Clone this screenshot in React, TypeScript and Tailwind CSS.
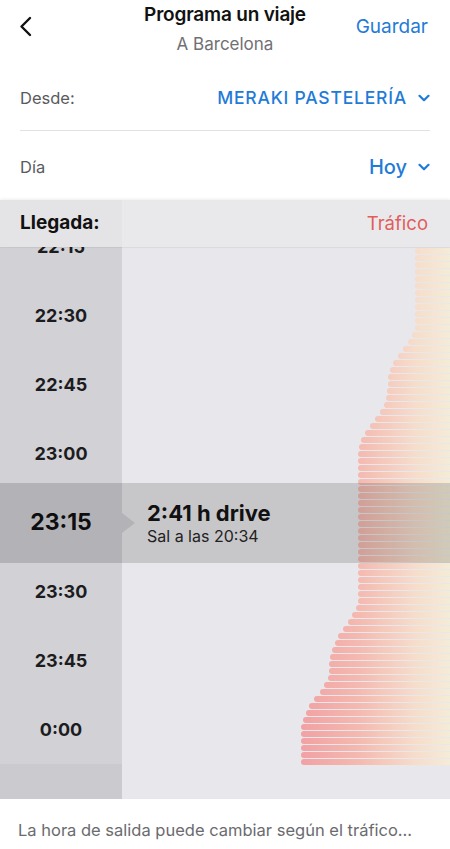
import React from "react";

const TIMES = ["22:15", "22:30", "22:45", "23:00", "23:15", "23:30", "23:45", "0:00"];
const SELECTED = "23:15";

// left edge (page x) of the traffic bars, sampled by page y
const EDGE: [number, number][] = [
  [247, 415], [330, 415], [335, 412], [345, 406], [352, 401], [358, 396],
  [365, 392], [372, 389], [390, 387], [400, 386], [405, 384], [410, 381],
  [415, 378], [422, 373], [430, 367], [436, 363], [443, 360], [450, 358],
  [605, 358], [610, 354], [615, 352], [621, 349], [628, 344], [635, 339],
  [642, 335], [649, 332], [656, 330], [670, 329], [677, 328], [684, 325],
  [691, 321], [698, 315], [705, 310], [712, 306], [719, 303], [726, 301],
  [770, 301],
];

function edgeAt(y: number) {
  for (let i = 1; i < EDGE.length; i++) {
    const [y0, x0] = EDGE[i - 1];
    const [y1, x1] = EDGE[i];
    if (y <= y1) return x0 + ((x1 - x0) * (y - y0)) / (y1 - y0);
  }
  return EDGE[EDGE.length - 1][1];
}

const BARS = Array.from({ length: 74 }, (_, i) => Math.round(450 - edgeAt(248 + i * 7 + 3)));

function ChevronDown() {
  return (
    <svg width="12" height="8" viewBox="0 0 12 8" fill="none">
      <path d="M1.5 1.8 6 6.2l4.5-4.4" stroke="#1f7bd8" strokeWidth="2.2" strokeLinecap="round" strokeLinejoin="round" />
    </svg>
  );
}

export default function App() {
  return (
    <div className="w-[450px] h-[849px] overflow-hidden bg-white text-[#111] font-['Inter',sans-serif]">
      {/* Nav */}
      <div className="relative h-[66px]">
        <button className="absolute left-[18px] top-[16px]">
          <svg width="16" height="21" viewBox="0 0 16 21" fill="none">
            <path d="M12 2 3.5 10.5 12 19" stroke="#111" strokeWidth="2.4" strokeLinecap="round" strokeLinejoin="round" />
          </svg>
        </button>
        <div className="flex flex-col items-center pt-[3px]">
          <h1 className="text-[19px] leading-[24px] font-semibold tracking-[-0.2px]">Programa un viaje</h1>
          <p className="mt-[6px] text-[17px] leading-[22px] text-[#707075]">A Barcelona</p>
        </div>
        <button className="absolute right-[22px] top-[15px] text-[19px] leading-[24px] text-[#1f7bd8]">Guardar</button>
      </div>

      {/* Form */}
      <div className="px-5">
        <div className="flex h-[64px] items-center justify-between">
          <span className="text-[16.5px] text-[#5a5a5e]">Desde:</span>
          <span className="flex items-center gap-[11px] text-[17.5px] font-medium tracking-[0.8px] text-[#1f7bd8]">
            MERAKI PASTELERÍA
            <ChevronDown />
          </span>
        </div>
        <div className="h-px bg-[#e2e2e4]" />
        <div className="flex h-[69px] items-center justify-between pt-[3px]">
          <span className="text-[16.5px] text-[#5a5a5e]">Día</span>
          <span className="flex items-center gap-[11px] text-[20px] font-medium text-[#1f7bd8]">
            Hoy
            <ChevronDown />
          </span>
        </div>
      </div>

      {/* Column header */}
      <div className="relative z-10 flex h-[47px] items-center shadow-[0_-1px_3px_rgba(0,0,0,0.07),0_1px_1px_rgba(0,0,0,0.04)]">
        <div className="flex h-full w-[122px] items-center bg-[#e4e4e7] pl-5">
          <span className="text-[19px] font-bold">Llegada:</span>
        </div>
        <div className="flex h-full flex-1 items-center justify-end bg-[#e9e9ec] pr-[22px]">
          <span className="text-[18.5px] text-[#e25c5c]">Tráfico</span>
        </div>
      </div>

      {/* Chart */}
      <div className="relative flex h-[552px] overflow-hidden">
        <div className="flex w-[122px] flex-col bg-[#d1d1d6]">
          <div className="-mt-[35px] flex flex-col">
            {TIMES.map((t) => (
              <div key={t} className="flex h-[69px] items-center justify-center">
                <span className={t === SELECTED ? "text-[23px] font-bold" : "text-[18px] font-bold text-[#1c1c1e]"}>{t}</span>
              </div>
            ))}
          </div>
          <div className="flex-1 bg-[#cbcbcf]" />
        </div>
        <div className="flex flex-1 flex-col gap-px bg-[#e8e8ec] pt-px">
          {BARS.map((w, i) => (
            <div
              key={i}
              className="ml-auto h-[6px] shrink-0 rounded-l-full bg-[linear-gradient(90deg,#f2a0a3_54%,#f4b9b0_72%,#f6dccb_89%,#f4ecd7_100%)] bg-[length:328px_100%] bg-right bg-no-repeat"
              style={{ width: w }}
            />
          ))}
        </div>

        <svg className="absolute left-[122px] top-[266px]" width="13" height="20" viewBox="0 0 13 20">
          <path d="M0 0 13 10 0 20Z" fill="#d1d1d6" />
        </svg>

        <div className="absolute inset-x-0 top-[236px] flex h-[80px] flex-col justify-center bg-black/[0.14] pl-[147px]">
          <p className="text-[22px] leading-[26px] font-bold">2:41 h drive</p>
          <p className="text-[16px] leading-[20px] text-[#222]">Sal a las 20:34</p>
        </div>
      </div>

      {/* Footer */}
      <div className="h-[50px] bg-white px-[18px] pt-[20px]">
        <p className="text-[16.5px] leading-[22px] text-[#6b6b6f]">La hora de salida puede cambiar según el tráfico...</p>
      </div>
    </div>
  );
}
